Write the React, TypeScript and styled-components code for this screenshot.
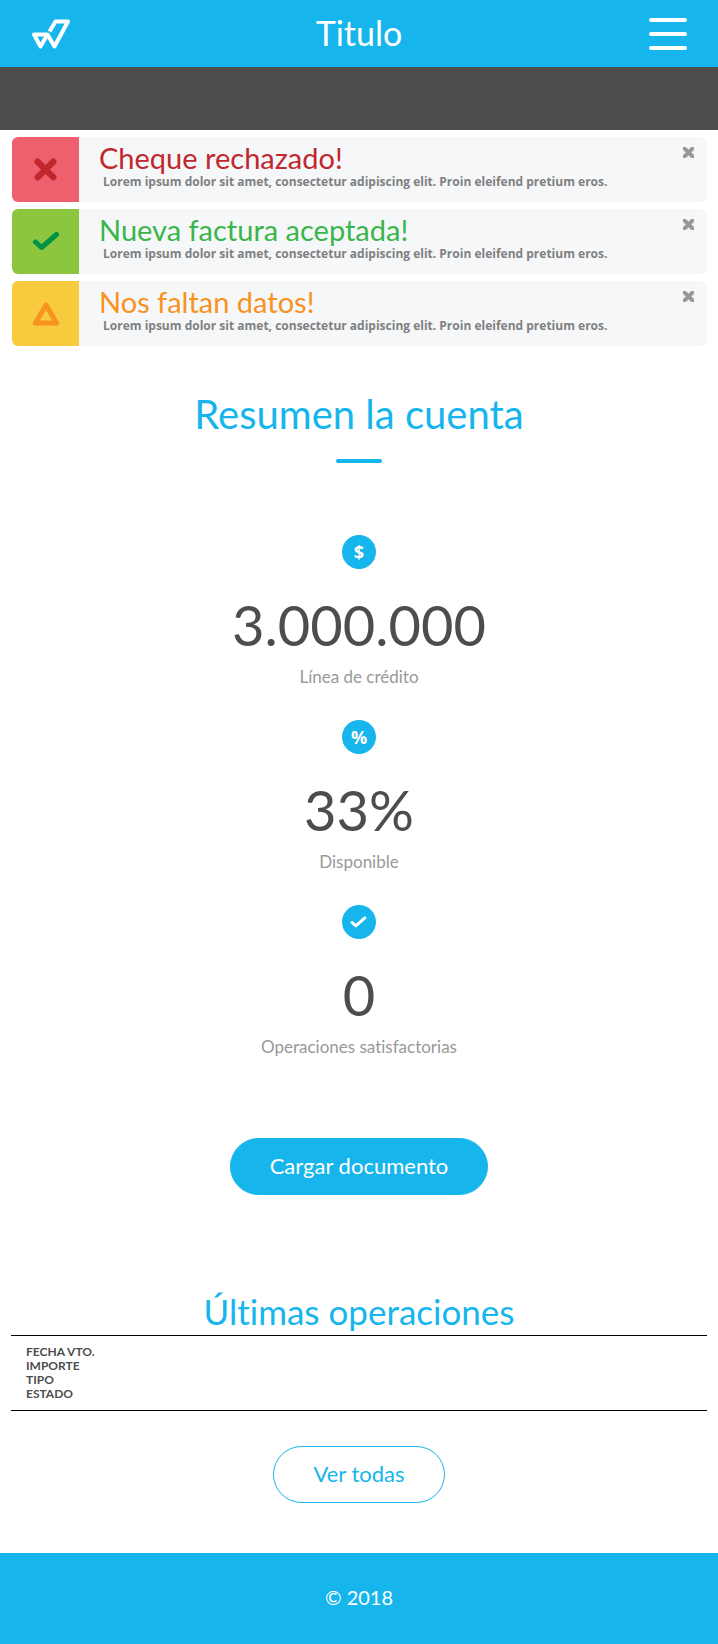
import React from "react";
import styled, { createGlobalStyle } from "styled-components";

const blue = "#16b5ec";
const dark = "#4d4d4d";

const GlobalStyle = createGlobalStyle`
  *, *::before, *::after { box-sizing: border-box; }
  body {
    margin: 0;
    background: #fff;
    color: ${dark};
    font-family: Lato, "Open Sans", sans-serif;
    font-variant-ligatures: none;
  }
  h1, h2, p { margin: 0; }
  button { font-family: inherit; cursor: pointer; }
`;

const Header = styled.header`
  display: grid;
  grid-template-columns: 1fr auto 1fr;
  align-items: center;
  height: 67px;
  padding: 0 31px;
  background: ${blue};
  color: #fff;
`;

const LogoLink = styled.a`
  justify-self: start;
  display: flex;
  color: inherit;
`;

const PageTitle = styled.h1`
  padding-bottom: 2px;
  font-size: 34px;
  font-weight: 400;
  line-height: 40px;
`;

const MenuButton = styled.button`
  justify-self: end;
  display: flex;
  flex-direction: column;
  gap: 10px;
  padding: 0;
  border: 0;
  background: none;
`;

const MenuBar = styled.span`
  width: 38px;
  height: 4px;
  border-radius: 2px;
  background: #fff;
`;

const Banner = styled.div`
  height: 63px;
  background: ${dark};
`;

const AlertList = styled.section`
  display: flex;
  flex-direction: column;
  gap: 7px;
  padding: 7px 11px 0 12px;
`;

const AlertCard = styled.article`
  display: flex;
  min-height: 65px;
  border-radius: 6px;
  background: #f6f7f9;
  overflow: hidden;
`;

const AlertIcon = styled.div<{ $bg: string; $fg: string }>`
  flex: none;
  display: flex;
  align-items: center;
  justify-content: center;
  width: 67px;
  background: ${(p) => p.$bg};
  color: ${(p) => p.$fg};
`;

const AlertBody = styled.div`
  flex: 1;
  padding: 5px 0 8px 20px;
`;

const AlertTitle = styled.h2<{ $color: string }>`
  color: ${(p) => p.$color};
  font-size: 29px;
  font-weight: 400;
  line-height: 32px;
`;

const AlertText = styled.p`
  padding-left: 4px;
  color: #808080;
  font-family: "Open Sans", sans-serif;
  font-size: 12px;
  font-weight: 700;
  line-height: 16px;
`;

const CloseButton = styled.button`
  align-self: flex-start;
  display: flex;
  margin: 10px 13px 0 0;
  padding: 0;
  border: 0;
  background: none;
  color: #999;
`;

const Section = styled.section`
  display: flex;
  flex-direction: column;
  align-items: center;
  padding: 0 11px;
`;

const SummaryHeading = styled.div`
  display: flex;
  flex-direction: column;
  align-items: center;
  padding-top: 44px;
`;

const SectionTitle = styled.h2<{ $size: number }>`
  color: ${blue};
  font-size: ${(p) => p.$size}px;
  font-weight: 400;
  line-height: 48px;
`;

const Rule = styled.div`
  width: 46px;
  height: 4px;
  margin-top: 21px;
  border-radius: 2px;
  background: ${blue};
`;

const Stats = styled.div`
  display: flex;
  flex-direction: column;
  gap: 31px;
  margin-top: 72px;
`;

const Stat = styled.div`
  display: flex;
  flex-direction: column;
  align-items: center;
`;

const Badge = styled.div`
  display: flex;
  align-items: center;
  justify-content: center;
  width: 34px;
  height: 34px;
  border-radius: 50%;
  background: ${blue};
  color: #fff;
  font-family: "Open Sans", sans-serif;
  font-size: 18px;
  font-weight: 700;
`;

const StatValue = styled.p`
  margin-top: 20px;
  font-size: 56px;
  font-weight: 400;
  line-height: 72px;
`;

const StatLabel = styled.p`
  margin-top: 4px;
  color: #999;
  font-size: 17px;
  line-height: 24px;
`;

const PillButton = styled.button<{ $outline?: boolean }>`
  height: 57px;
  padding: 0 39px 2px;
  border: 1px solid ${blue};
  border-radius: 29px;
  background: ${(p) => (p.$outline ? "#fff" : blue)};
  color: ${(p) => (p.$outline ? blue : "#fff")};
  font-size: 22px;
  font-weight: 400;
`;

const UploadRow = styled.div`
  display: flex;
  justify-content: center;
  padding: 79px 11px 92px;
`;

const Operations = styled.table`
  display: block;
  width: 100%;
  margin-bottom: 35px;
  padding: 9px 15px;
  border: solid #000;
  border-width: 1px 0;

  thead, tr, th { display: block; }
`;

const Column = styled.th`
  padding: 0;
  font-size: 12px;
  font-weight: 700;
  line-height: 14px;
  text-align: left;
  text-transform: uppercase;
`;

const Footer = styled.footer`
  display: flex;
  align-items: center;
  justify-content: center;
  height: 91px;
  margin-top: 50px;
  padding-bottom: 3px;
  background: ${blue};
  color: #fff;
  font-size: 20px;
`;

const Logo = () => (
  <svg width="42" height="34" viewBox="0 0 42 34" fill="none" stroke="currentColor" strokeWidth="4" strokeLinejoin="round" aria-hidden="true">
    <path d="M18.5 14.5L24.5 4.5H37L23.5 29.5L16.5 17.5H3L9.5 29.5L16.5 17.5" />
  </svg>
);

const Cross = () => (
  <svg width="23" height="23" viewBox="0 0 22 22" fill="none" stroke="currentColor" strokeWidth="6" strokeLinecap="round" aria-hidden="true">
    <path d="M3.5 3.5L18.5 18.5M18.5 3.5L3.5 18.5" />
  </svg>
);

const CloseMark = () => (
  <svg width="11" height="11" viewBox="0 0 11 11" fill="none" stroke="currentColor" strokeWidth="4" strokeLinecap="square" aria-hidden="true">
    <path d="M1.5 1.5L9.5 9.5M9.5 1.5L1.5 9.5" />
  </svg>
);

const Check = ({ size }: { size: number }) => (
  <svg width={size} height={size} viewBox="0 0 28 28" fill="none" stroke="currentColor" strokeWidth="5" strokeLinecap="round" strokeLinejoin="round" aria-hidden="true">
    <path d="M3.5 14L9.5 19.5L24.5 6.5" />
  </svg>
);

const Triangle = () => (
  <svg width="28" height="24" viewBox="0 0 28 24" fill="none" stroke="currentColor" strokeWidth="5" strokeLinejoin="round" aria-hidden="true">
    <path d="M14 3L24.5 21H3.5Z" />
  </svg>
);

const message = "Lorem ipsum dolor sit amet, consectetur adipiscing elit. Proin eleifend pretium eros.";

const alerts = [
  { title: "Cheque rechazado!", color: "#c1272d", bg: "#ef606e", fg: "#c1272d", icon: <Cross /> },
  { title: "Nueva factura aceptada!", color: "#39b54a", bg: "#8cc63f", fg: "#009245", icon: <Check size={28} /> },
  { title: "Nos faltan datos!", color: "#f7931e", bg: "#f8cb3e", fg: "#f7931e", icon: <Triangle /> },
];

const stats = [
  { icon: "$", value: "3.000.000", label: "Línea de crédito" },
  { icon: "%", value: "33%", label: "Disponible" },
  { icon: <Check size={17} />, value: "0", label: "Operaciones satisfactorias" },
];

const columns = ["Fecha vto.", "Importe", "Tipo", "Estado"];

export default function App() {
  return (
    <>
      <GlobalStyle />
      <Header>
        <LogoLink href="#" aria-label="Inicio">
          <Logo />
        </LogoLink>
        <PageTitle>Titulo</PageTitle>
        <MenuButton type="button" aria-label="Menú">
          <MenuBar />
          <MenuBar />
          <MenuBar />
        </MenuButton>
      </Header>
      <Banner />
      <main>
        <AlertList>
          {alerts.map((a) => (
            <AlertCard key={a.title}>
              <AlertIcon $bg={a.bg} $fg={a.fg}>{a.icon}</AlertIcon>
              <AlertBody>
                <AlertTitle $color={a.color}>{a.title}</AlertTitle>
                <AlertText>{message}</AlertText>
              </AlertBody>
              <CloseButton type="button" aria-label="Cerrar">
                <CloseMark />
              </CloseButton>
            </AlertCard>
          ))}
        </AlertList>
        <Section>
          <SummaryHeading>
            <SectionTitle $size={40}>Resumen la cuenta</SectionTitle>
            <Rule />
          </SummaryHeading>
          <Stats>
            {stats.map((s) => (
              <Stat key={s.label}>
                <Badge>{s.icon}</Badge>
                <StatValue>{s.value}</StatValue>
                <StatLabel>{s.label}</StatLabel>
              </Stat>
            ))}
          </Stats>
        </Section>
        <UploadRow>
          <PillButton type="button">Cargar documento</PillButton>
        </UploadRow>
        <Section>
          <SectionTitle $size={35}>Últimas operaciones</SectionTitle>
          <Operations>
            <thead>
              <tr>
                {columns.map((c) => (
                  <Column key={c} scope="col">{c}</Column>
                ))}
              </tr>
            </thead>
          </Operations>
          <PillButton type="button" $outline>Ver todas</PillButton>
        </Section>
      </main>
      <Footer>© 2018</Footer>
    </>
  );
}
